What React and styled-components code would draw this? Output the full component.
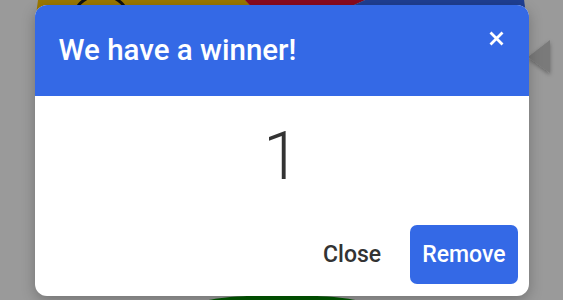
import React from 'react';
import styled, { createGlobalStyle } from 'styled-components';

const GlobalStyle = createGlobalStyle`
  html, body {
    margin: 0;
    padding: 0;
    font-family: Roboto, "Liberation Sans", sans-serif;
  }
`;

const Page = styled.div`
  position: relative;
  width: 563px;
  height: 300px;
  overflow: hidden;
  background-color: #9a9a9a;
`;

const Wheel = styled.svg`
  position: absolute;
  left: 0;
  top: 0;
`;

const Overlay = styled.div`
  position: absolute;
  inset: 0;
  display: flex;
  justify-content: center;
  align-items: center;
`;

const Dialog = styled.div`
  width: 494px;
  height: 291px;
  background-color: white;
  border-radius: 12px;
  overflow: hidden;
  display: flex;
  flex-direction: column;
  box-shadow: 0 4px 14px rgba(0, 0, 0, 0.25);
`;

const Header = styled.div`
  height: 91px;
  background-color: #3469e6;
  color: white;
  display: flex;
  justify-content: space-between;
  align-items: flex-start;
  padding: 0 24px;
  box-sizing: border-box;
`;

const Title = styled.h2`
  margin: 0;
  padding-top: 27px;
  font-size: 29.5px;
  font-weight: 500;
  line-height: 36px;
`;

const CloseIcon = styled.button`
  margin: 26px 1px 0 0;
  padding: 0;
  border: none;
  background: transparent;
  color: white;
  display: flex;
  cursor: pointer;
`;

const Body = styled.div`
  flex: 1;
  display: flex;
  justify-content: center;
  padding-top: 28px;
`;

const Winner = styled.div`
  font-size: 66px;
  font-weight: 300;
  color: #333;
  line-height: 66px;
`;

const Footer = styled.div`
  display: flex;
  justify-content: flex-end;
  align-items: center;
  gap: 17px;
  padding: 0 11px 12px 0;
`;

const Button = styled.button`
  height: 59px;
  padding: 0 12px;
  border: none;
  border-radius: 7px;
  font-family: Roboto, "Liberation Sans", sans-serif;
  font-size: 23px;
  font-weight: 500;
  cursor: pointer;
  background-color: ${(p) => (p.primary ? '#3469e6' : 'transparent')};
  color: ${(p) => (p.primary ? 'white' : '#333')};
`;

export default function App() {
  return (
    <>
      <GlobalStyle />
      <Page>
        <Wheel width="563" height="300" viewBox="0 0 563 300">
          <defs>
            <filter id="pointerShadow" x="-50%" y="-50%" width="200%" height="200%">
              <feDropShadow dx="0" dy="2" stdDeviation="2" floodColor="#000" floodOpacity="0.35" />
            </filter>
          </defs>
          <path d="M281 38 L111.7 -140.4 A246 246 0 0 0 281 284 Z" fill="#9b7800" />
          <path d="M281 38 L111.7 -140.4 A246 246 0 0 1 505.2 -63.3 Z" fill="#8b0a1e" />
          <path d="M281 38 L505.2 -63.3 A246 246 0 0 1 281 284 Z" fill="#1f3f93" />
          <circle cx="101" cy="25" r="30" fill="none" stroke="#111" strokeWidth="3" />
          <ellipse cx="282" cy="304" rx="82" ry="9" fill="#005a00" />
          <polygon points="528,57 550,40 550,73" fill="#7a7a7a" filter="url(#pointerShadow)" />
        </Wheel>
        <Overlay>
          <Dialog>
            <Header>
              <Title>We have a winner!</Title>
              <CloseIcon aria-label="close">
                <svg width="15" height="15" viewBox="0 0 15 15">
                  <path d="M1.5 1.5 L13.5 13.5 M13.5 1.5 L1.5 13.5" stroke="white" strokeWidth="2.8" />
                </svg>
              </CloseIcon>
            </Header>
            <Body>
              <Winner>1</Winner>
            </Body>
            <Footer>
              <Button>Close</Button>
              <Button primary>Remove</Button>
            </Footer>
          </Dialog>
        </Overlay>
      </Page>
    </>
  );
}
